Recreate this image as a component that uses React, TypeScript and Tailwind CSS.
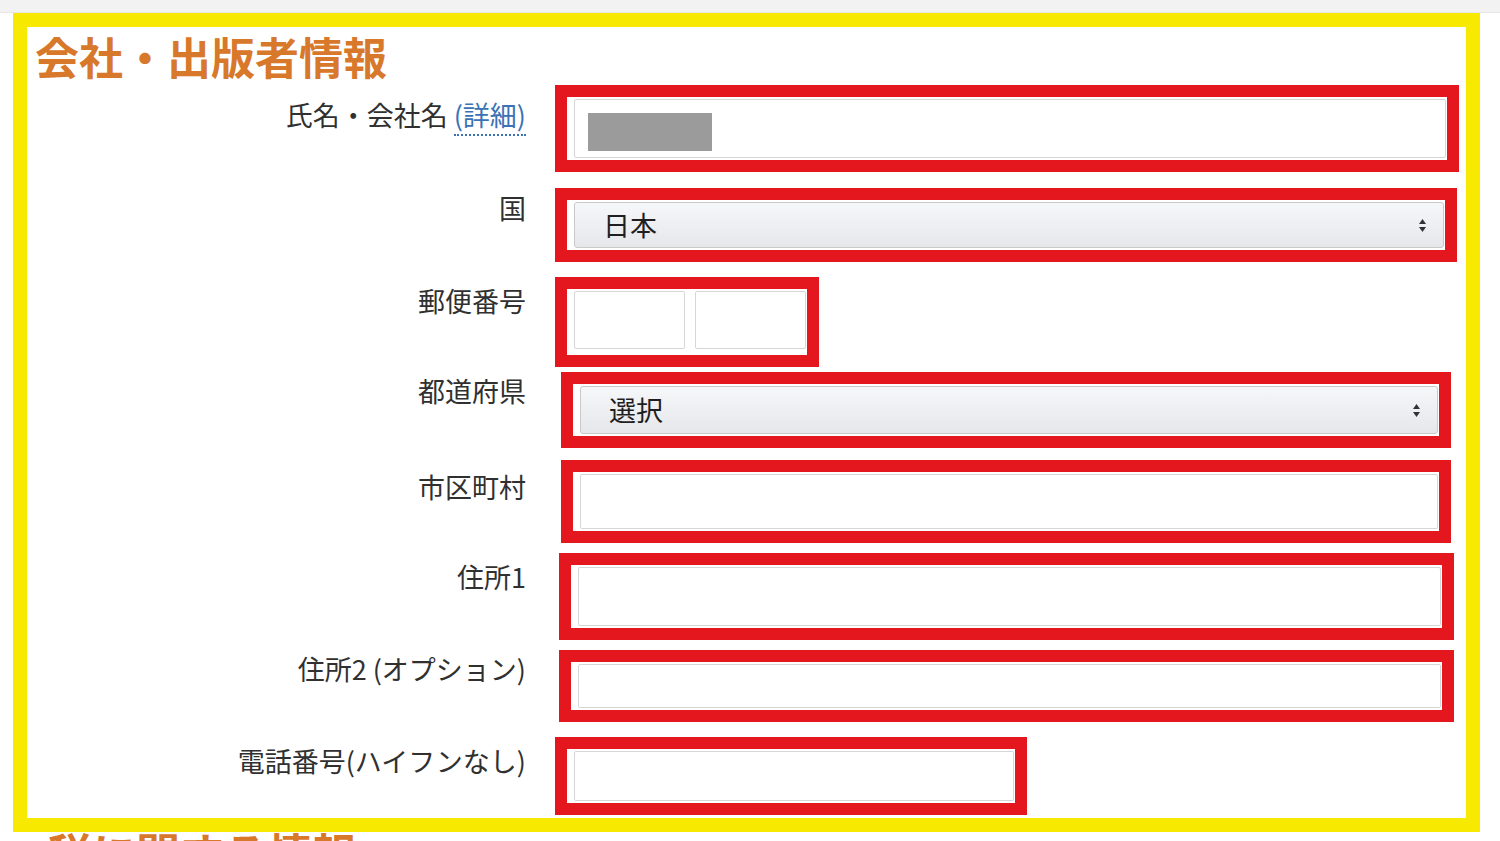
import React from "react";

type Field = "name" | "country" | "zip" | "pref" | "text";

type Row = {
  label: React.ReactNode;
  labelPad: string;
  box: string;
  field: Field;
};

const rows: Row[] = [
  {
    label: (
      <>
        氏名・会社名{" "}
        <span className="text-[#3b72b5] border-b-2 border-dotted border-[#3b72b5]">(詳細)</span>
      </>
    ),
    labelPad: "pt-[15px]",
    box: "mt-[3px] h-[87px] ml-[29px] w-[904px]",
    field: "name",
  },
  { label: "国", labelPad: "pt-[5px]", box: "mt-[16px] h-[74px] ml-[29px] w-[902px]", field: "country" },
  { label: "郵便番号", labelPad: "pt-[9px]", box: "mt-[15px] h-[90px] ml-[29px] w-[264px]", field: "zip" },
  { label: "都道府県", labelPad: "pt-[4px]", box: "mt-[5px] h-[76px] ml-[35px] w-[890px]", field: "pref" },
  { label: "市区町村", labelPad: "pt-[12px]", box: "mt-[12px] h-[83px] ml-[35px] w-[890px]", field: "text" },
  { label: "住所1", labelPad: "pt-[9px]", box: "mt-[10px] h-[87px] ml-[33px] w-[895px]", field: "text" },
  { label: "住所2 (オプション)", labelPad: "pt-[4px]", box: "mt-[10px] h-[72px] ml-[33px] w-[895px]", field: "text" },
  { label: "電話番号(ハイフンなし)", labelPad: "pt-[9px]", box: "mt-[15px] h-[78px] ml-[29px] w-[472px]", field: "text" },
];

function SelectArrows() {
  return (
    <svg width="9" height="15" viewBox="0 0 9 15" className="shrink-0">
      <path d="M4.5 1 L8 6 L1 6 Z" fill="#333" />
      <path d="M1 9 L8 9 L4.5 14 Z" fill="#333" />
    </svg>
  );
}

function FakeSelect({ value }: { value: string }) {
  return (
    <div className="flex-1 h-full flex items-center justify-between pl-[28px] pr-[16px] border border-[#c9c9c9] rounded-[3px] bg-gradient-to-b from-[#f6f7f9] to-[#e5e7ea] text-[27px] text-[#1f1f1f]">
      <span>{value}</span>
      <SelectArrows />
    </div>
  );
}

function TextBox({ children }: { children?: React.ReactNode }) {
  return (
    <div className="flex-1 h-full flex items-center border border-[#d6d6d6] rounded-[2px] bg-white">
      {children}
    </div>
  );
}

function FieldBody({ field }: { field: Field }) {
  switch (field) {
    case "name":
      return (
        <TextBox>
          <div className="ml-[13px] mt-[6px] w-[124px] h-[38px] bg-[#9b9b9b]" />
        </TextBox>
      );
    case "country":
      return <FakeSelect value="日本" />;
    case "pref":
      return <FakeSelect value="選択" />;
    case "zip":
      return (
        <div className="flex-1 h-full flex gap-[10px] pb-[4px]">
          <TextBox />
          <TextBox />
        </div>
      );
    default:
      return <TextBox />;
  }
}

export default function App() {
  return (
    <div
      className="min-h-screen bg-white overflow-hidden"
      style={{ fontFamily: '"Noto Sans CJK JP", "Noto Sans", sans-serif' }}
    >
      <div className="h-[13px] bg-[#f2f2f2] border-b border-[#e6e6e6]" />

      <div className="ml-[13px] w-[1467px] border-[14px] border-[#f7e900] pb-[3px]">
        <h2 className="mt-[3px] pl-[8px] text-[44px] leading-[52px] font-bold text-[#d8782a]">
          会社・出版者情報
        </h2>

        {rows.map((row, i) => (
          <div key={i} className="flex items-start">
            <div
              className={`w-[499px] shrink-0 text-right text-[27px] leading-[30px] text-[#303030] ${row.box.split(" ")[0]} ${row.labelPad}`}
            >
              {row.label}
            </div>
            <div
              className={`flex border-[12px] border-[#e4161e] pl-[7px] pr-[1px] py-[2px] ${row.box}`}
            >
              <FieldBody field={row.field} />
            </div>
          </div>
        ))}
      </div>

      <h2 className="pl-[48px] text-[44px] leading-[40px] font-bold text-[#d8782a]">
        税に関する情報
      </h2>
    </div>
  );
}
